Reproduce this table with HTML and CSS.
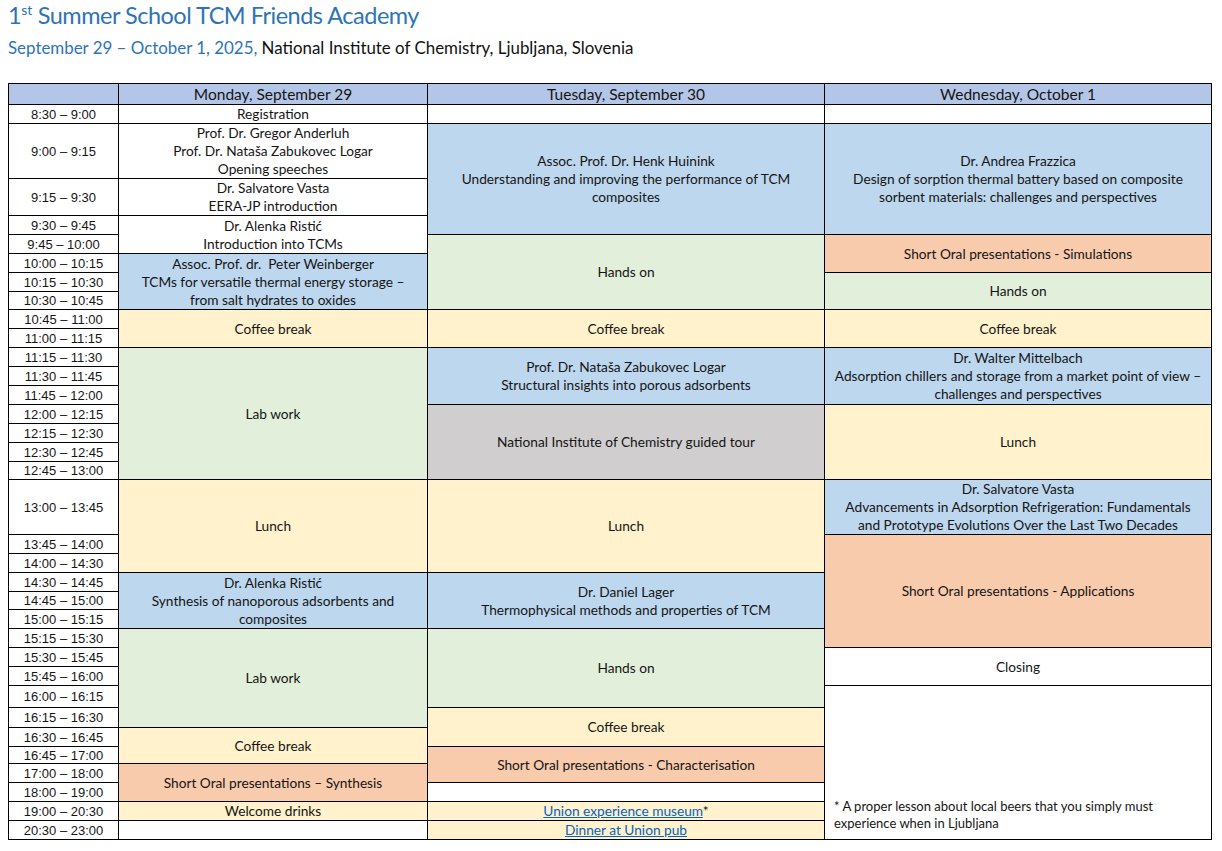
FILE: index.html
```html
<!DOCTYPE html>
<html lang="en">
<head>
<meta charset="utf-8">
<title>1st Summer School TCM Friends Academy</title>
<link rel="stylesheet" href="styles.css">
</head>
<body>
<div class="page">
  <h1 class="title">1<sup>st</sup> Summer School TCM Friends Academy</h1>
  <p class="subtitle"><span class="dates">September 29 – October 1, 2025,</span> National Institute of Chemistry, Ljubljana, Slovenia</p>

  <table class="schedule">
    <colgroup>
      <col class="c-time">
      <col class="c-mon">
      <col class="c-tue">
      <col class="c-wed">
    </colgroup>
    <thead>
      <tr class="h21">
        <th></th>
        <th>Monday, September 29</th>
        <th>Tuesday, September 30</th>
        <th>Wednesday, October 1</th>
      </tr>
    </thead>
    <tbody>
      <tr><td class="t">8:30 – 9:00</td><td>Registration</td><td></td><td></td></tr>
      <tr class="h55">
        <td class="t">9:00 – 9:15</td>
        <td>Prof. Dr. Gregor Anderluh<br>Prof. Dr. Nataša Zabukovec Logar<br>Opening speeches</td>
        <td class="blue" rowspan="3">Assoc. Prof. Dr. Henk Huinink<br>Understanding and improving the performance of TCM<br>composites</td>
        <td class="blue" rowspan="3">Dr. Andrea Frazzica<br>Design of sorption thermal battery based on composite<br>sorbent materials: challenges and perspectives</td>
      </tr>
      <tr class="h37">
        <td class="t">9:15 – 9:30</td>
        <td>Dr. Salvatore Vasta<br>EERA-JP introduction</td>
      </tr>
      <tr>
        <td class="t">9:30 – 9:45</td>
        <td rowspan="2">Dr. Alenka Ristić<br>Introduction into TCMs</td>
      </tr>
      <tr>
        <td class="t">9:45 – 10:00</td>
        <td class="green" rowspan="4">Hands on</td>
        <td class="orange" rowspan="2">Short Oral presentations - Simulations</td>
      </tr>
      <tr>
        <td class="t">10:00 – 10:15</td>
        <td class="blue" rowspan="3">Assoc. Prof. dr.&nbsp; Peter Weinberger<br>TCMs for versatile thermal energy storage –<br>from salt hydrates to oxides</td>
      </tr>
      <tr>
        <td class="t">10:15 – 10:30</td>
        <td class="green" rowspan="2">Hands on</td>
      </tr>
      <tr class="h18"><td class="t">10:30 – 10:45</td></tr>
      <tr>
        <td class="t">10:45 – 11:00</td>
        <td class="yellow" rowspan="2">Coffee break</td>
        <td class="yellow" rowspan="2">Coffee break</td>
        <td class="yellow" rowspan="2">Coffee break</td>
      </tr>
      <tr><td class="t">11:00 – 11:15</td></tr>
      <tr>
        <td class="t">11:15 – 11:30</td>
        <td class="green" rowspan="7">Lab work</td>
        <td class="blue" rowspan="3">Prof. Dr. Nataša Zabukovec Logar<br>Structural insights into porous adsorbents</td>
        <td class="blue" rowspan="3">Dr. Walter Mittelbach<br>Adsorption chillers and storage from a market point of view –<br>challenges and perspectives</td>
      </tr>
      <tr><td class="t">11:30 – 11:45</td></tr>
      <tr><td class="t">11:45 – 12:00</td></tr>
      <tr>
        <td class="t">12:00 – 12:15</td>
        <td class="gray" rowspan="4">National Institute of Chemistry guided tour</td>
        <td class="yellow" rowspan="4">Lunch</td>
      </tr>
      <tr><td class="t">12:15 – 12:30</td></tr>
      <tr><td class="t">12:30 – 12:45</td></tr>
      <tr class="h18"><td class="t">12:45 – 13:00</td></tr>
      <tr class="h55">
        <td class="t">13:00 – 13:45</td>
        <td class="yellow" rowspan="3">Lunch</td>
        <td class="yellow" rowspan="3">Lunch</td>
        <td class="blue">Dr. Salvatore Vasta<br>Advancements in Adsorption Refrigeration: Fundamentals<br>and Prototype Evolutions Over the Last Two Decades</td>
      </tr>
      <tr>
        <td class="t">13:45 – 14:00</td>
        <td class="orange" rowspan="6">Short Oral presentations - Applications</td>
      </tr>
      <tr><td class="t">14:00 – 14:30</td></tr>
      <tr>
        <td class="t">14:30 – 14:45</td>
        <td class="blue" rowspan="3">Dr. Alenka Ristić<br>Synthesis of nanoporous adsorbents and<br>composites</td>
        <td class="blue" rowspan="3">Dr. Daniel Lager<br>Thermophysical methods and properties of TCM</td>
      </tr>
      <tr class="h18"><td class="t">14:45 – 15:00</td></tr>
      <tr><td class="t">15:00 – 15:15</td></tr>
      <tr>
        <td class="t">15:15 – 15:30</td>
        <td class="green" rowspan="5">Lab work</td>
        <td class="green" rowspan="4">Hands on</td>
      </tr>
      <tr>
        <td class="t">15:30 – 15:45</td>
        <td rowspan="2">Closing</td>
      </tr>
      <tr><td class="t">15:45 – 16:00</td></tr>
      <tr class="h22">
        <td class="t">16:00 – 16:15</td>
        <td class="note" rowspan="8">* A proper lesson about local beers that you simply must<br>experience when in Ljubljana</td>
      </tr>
      <tr class="h20">
        <td class="t">16:15 – 16:30</td>
        <td class="yellow" rowspan="2">Coffee break</td>
      </tr>
      <tr>
        <td class="t">16:30 – 16:45</td>
        <td class="yellow" rowspan="2">Coffee break</td>
      </tr>
      <tr class="h17">
        <td class="t">16:45 – 17:00</td>
        <td class="orange" rowspan="2">Short Oral presentations - Characterisation</td>
      </tr>
      <tr>
        <td class="t">17:00 – 18:00</td>
        <td class="orange" rowspan="2">Short Oral presentations – Synthesis</td>
      </tr>
      <tr>
        <td class="t">18:00 – 19:00</td>
        <td></td>
      </tr>
      <tr>
        <td class="t">19:00 – 20:30</td>
        <td class="yellow">Welcome drinks</td>
        <td class="yellow"><a href="#">Union experience museum</a>*</td>
      </tr>
      <tr>
        <td class="t">20:30 – 23:00</td>
        <td></td>
        <td class="yellow"><a href="#">Dinner at Union pub</a></td>
      </tr>
    </tbody>
  </table>
</div>
</body>
</html>
```
FILE: styles.css
```css
html, body {
  margin: 0;
  padding: 0;
  background: #ffffff;
}

.page {
  padding: 0 8px;
  font-family: Lato, "Open Sans", sans-serif;
  color: #151515;
}

.title {
  margin: 0;
  font-family: Lato, sans-serif;
  font-weight: 400;
  font-size: 23.5px;
  line-height: 31px;
  color: #2e74b5;
  letter-spacing: -0.5px;
}

.title sup {
  font-size: 14px;
  line-height: 0;
  vertical-align: 9px;
  letter-spacing: 0;
}

.subtitle {
  margin: 6px 0 0 0;
  font-size: 16.9px;
  line-height: 22px;
  color: #111111;
}

.subtitle .dates {
  color: #2e74b5;
}

.schedule {
  margin-top: 24px;
  border-collapse: collapse;
  table-layout: fixed;
  width: 1203px;
}

.c-time { width: 110px; }
.c-mon { width: 309px; }
.c-tue { width: 397px; }
.c-wed { width: 387px; }

.schedule th,
.schedule td {
  border: 1px solid #000000;
  padding: 0 7px;
  text-align: center;
  vertical-align: middle;
  font-size: 13.7px;
  line-height: 18px;
  white-space: nowrap;
  font-weight: 400;
}

.schedule tr { height: 19px; }
.schedule tr.h17 { height: 17px; }
.schedule tr.h18 { height: 18px; }
.schedule tr.h20 { height: 20px; }
.schedule tr.h21 { height: 21px; }
.schedule tr.h22 { height: 22px; }
.schedule tr.h37 { height: 37px; }
.schedule tr.h55 { height: 55px; }

.schedule th {
  background: #b4c6e7;
  font-size: 15.5px;
  line-height: 19px;
}

.schedule td.t {
  font-family: "Liberation Sans", Arial, sans-serif;
  font-size: 13px;
  line-height: 15px;
  color: #151515;
}

.blue { background: #bdd7ee; }
.green { background: #e2efda; }
.yellow { background: #fff2cc; }
.orange { background: #f8cbad; }
.gray { background: #d0cece; }

.schedule td.note {
  text-align: left;
  vertical-align: bottom;
  font-size: 13px;
  line-height: 17px;
  padding: 0 8px 7px 9px;
}

.schedule a {
  color: #0563c1;
  text-decoration: underline;
}
```
